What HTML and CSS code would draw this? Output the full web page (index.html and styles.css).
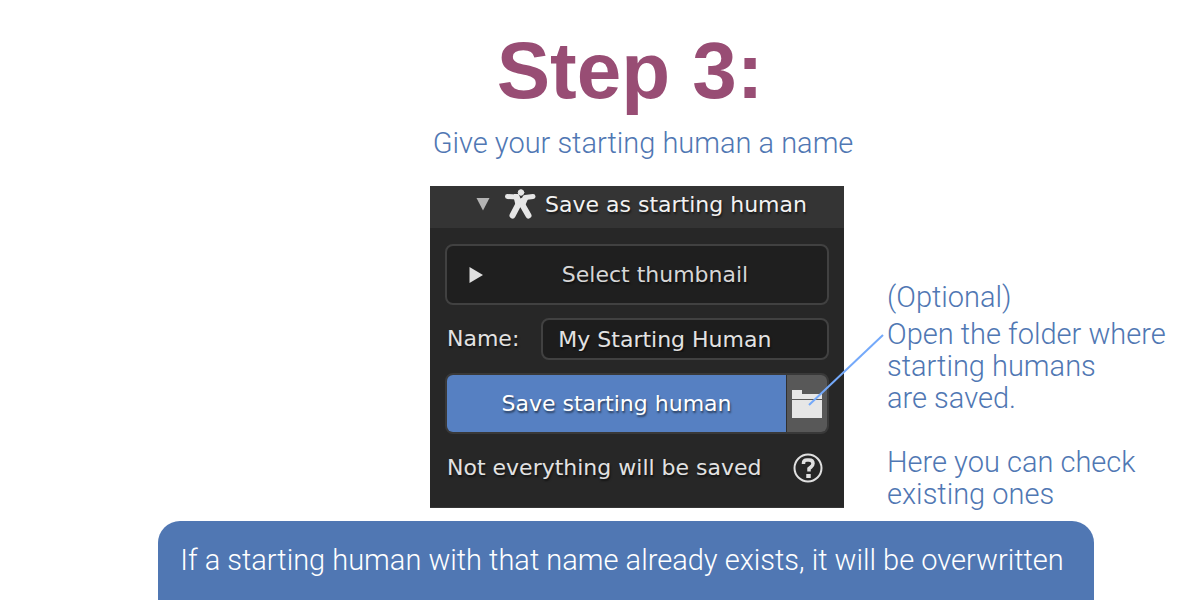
FILE: index.html
```html
<!DOCTYPE html>
<html lang="en">
<head>
<meta charset="utf-8">
<meta name="viewport" content="width=device-width, initial-scale=1">
<title>Step 3: Give your starting human a name</title>
<link rel="stylesheet" href="styles.css">
</head>
<body>
<main class="page">
  <header class="heading">
    <h1 class="title">Step 3:</h1>
    <p class="subtitle">Give your starting human a name</p>
  </header>
  <div class="content">
    <form class="panel">
      <button class="panel-header" type="button" aria-expanded="true">
        <svg class="caret" viewBox="0 0 14 14" aria-hidden="true"><path d="M0.500 0h13L7 12.500z"/></svg>
        <svg class="figure" viewBox="0 0 32 32" aria-hidden="true"><circle cx="17" cy="3.500" r="2.800"/><path d="M3.500 7.500L13 8M21 8.500L29 7.500" stroke-width="5"/><path d="M14 16L8.500 26.500M18.500 16L24.500 26.500" stroke-width="6"/><path d="M10 5h4.500l2 4.500L22 6.500l2 3.500-3.500 8h-8.500L10 10z" stroke="none"/></svg>
        <span>Save as starting human</span>
      </button>
      <div class="panel-body">
        <button class="select" type="button">
          <svg class="play" viewBox="0 0 14 16" aria-hidden="true"><path d="M0.500 0L14 8 0.500 16z"/></svg>
          <span>Select thumbnail</span>
        </button>
        <div class="name-row">
          <label for="name">Name:</label>
          <input class="name-input" id="name" type="text" value="My Starting Human">
        </div>
        <div class="save-row">
          <button class="save" type="submit">Save starting human</button>
          <button class="folder" type="button" aria-label="Open folder">
            <svg class="folder-icon" viewBox="0 0 30 28" aria-hidden="true"><path d="M0 0h10v4h20v5H0zM0 10h30v18H0z"/></svg>
          </button>
          <svg class="pointer" viewBox="0 0 74 70" aria-hidden="true"><path d="M0 70L74 0"/></svg>
        </div>
        <div class="info-row">
          <span>Not everything will be saved</span>
          <button class="help" type="button" aria-label="Help">
            <svg class="help-icon" viewBox="0 0 30 30" aria-hidden="true"><circle cx="15" cy="15" r="13.500" stroke-width="2"/><path d="M10.500 11V10Q10.500 7 14 7h2q4 0 4 3.500 0 2-2 3.500l-2 1.500v3" stroke-width="3.500"/><path d="M15.500 21v4" stroke-width="4.500"/></svg>
          </button>
        </div>
      </div>
    </form>
    <aside class="notes">
      <p class="optional">(Optional)</p>
      <p>Open the folder where<br>starting humans<br>are saved.</p>
      <p class="check">Here you can check<br>existing ones</p>
    </aside>
  </div>
  <footer class="banner">If a starting human with that name already exists, it will be overwritten</footer>
</main>
</body>
</html>
```
FILE: styles.css
```css
* { box-sizing: border-box; }
body {
  margin: 0;
  background: #fff;
  color: #5077b3;
  font: 300 29px/32px Roboto, "Liberation Sans", sans-serif;
}
h1, p { margin: 0; }
button, input {
  margin: 0;
  padding: 0;
  border: 0;
  background: none;
  color: inherit;
  font: inherit;
  text-shadow: inherit;
}
svg { display: block; flex: none; }
.page {
  min-height: 100vh;
  display: flex;
  flex-direction: column;
}
.heading {
  padding: 25px 0 27px 60px;
  text-align: center;
}
.title {
  color: #984d74;
  font: 700 80px/92px "Liberation Sans", Arial, sans-serif;
}
.subtitle { padding: 10px 0 0 26px; }
.content {
  display: grid;
  grid-template-columns: minmax(0, 430fr) minmax(0, 414fr) minmax(0, 356fr);
  align-items: start;
}
.panel {
  grid-column: 2;
  background: #272727;
  border-bottom: 1px solid #363636;
  color: #e2e2e2;
  font: 400 22px/28px "DejaVu Sans", sans-serif;
  text-shadow: 1px 2px 2px #0008;
  white-space: nowrap;
}
.panel-header {
  display: flex;
  align-items: center;
  width: 100%;
  height: 42px;
  padding: 0 0 5px 46px;
  background: #343434;
  color: #f2f2f2;
}
.caret { width: 14px; height: 14px; fill: #b4b4b4; }
.figure {
  width: 32px;
  height: 32px;
  margin: 0 9px 0 14px;
  fill: #e6e6e6;
  stroke: #e6e6e6;
  stroke-linecap: round;
}
.panel-body {
  display: flex;
  flex-direction: column;
  gap: 13px;
  padding: 16px 15px 18px;
}
.select {
  display: flex;
  align-items: center;
  height: 61px;
  padding: 0 22px;
  border: 2px solid #414141;
  border-radius: 8px;
  background: #1f1f1f;
  color: #d6d6d6;
}
.select span { flex: 1; padding-left: 22px; text-align: center; }
.play { width: 14px; height: 16px; fill: #e0e0e0; }
.name-row { display: flex; align-items: center; gap: 22px; padding-left: 2px; }
.name-input {
  flex: 1;
  min-width: 0;
  height: 42px;
  padding: 0 15px;
  border: 2px solid #414141;
  border-radius: 8px;
  background: #1d1d1d;
}
.save-row {
  position: relative;
  display: flex;
  gap: 1px;
  height: 61px;
  border: 2px solid #393939;
  border-radius: 8px;
  background: #303030;
}
.save {
  flex: 1;
  border-radius: 6px 0 0 6px;
  background: #5680c2;
  color: #fff;
}
.folder {
  display: grid;
  place-items: center;
  width: 40px;
  border-radius: 0 6px 6px 0;
  background: #585858;
}
.folder-icon { width: 30px; height: 28px; fill: #e6e6e6; }
.pointer {
  position: absolute;
  left: calc(100% - 18px);
  bottom: 27px;
  width: 74px;
  height: 70px;
  overflow: visible;
  stroke: #74a9fa;
  stroke-width: 2;
}
.info-row {
  display: flex;
  align-items: center;
  justify-content: space-between;
  height: 42px;
  padding: 0 6px 0 2px;
}
.help-icon { width: 30px; height: 30px; fill: none; stroke: #e0e0e0; }
.notes { padding: 95px 0 0 43px; white-space: nowrap; }
.optional { padding-bottom: 5px; }
.check { padding-top: 32px; }
.banner {
  flex: 1;
  width: 78%;
  margin: 11px 0 0 158px;
  padding: 23px 8px 0 0;
  border-radius: 22px 22px 0 0;
  background: #5077b3;
  color: #fff;
  text-align: center;
}
```
